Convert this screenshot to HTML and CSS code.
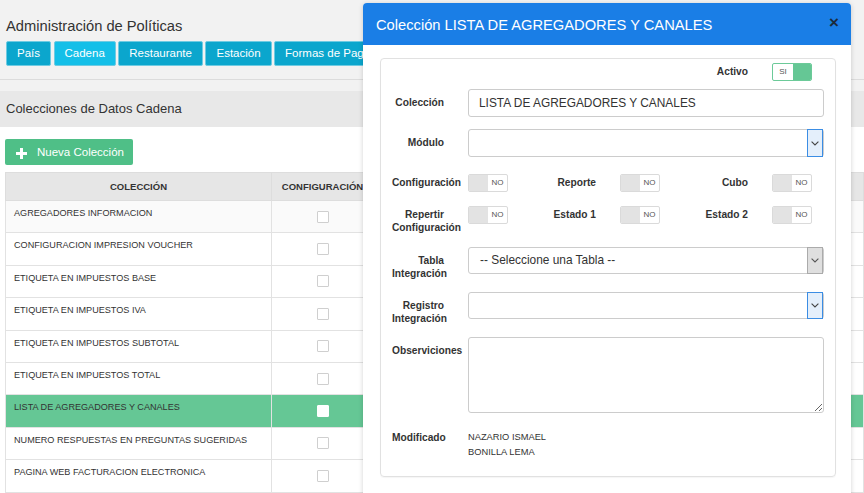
FILE: index.html
```html
<!DOCTYPE html>
<html lang="es">
<head>
<meta charset="utf-8">
<title>Administración de Políticas</title>
<link rel="stylesheet" href="styles.css">
</head>
<body>
<div class="page">
  <h1 class="page-title">Administración de Políticas</h1>
  <nav class="tabs">
    <a class="tab">País</a>
    <a class="tab active">Cadena</a>
    <a class="tab">Restaurante</a>
    <a class="tab">Estación</a>
    <a class="tab">Formas de Pago</a>
  </nav>
  <hr class="divider">
  <div class="band">Colecciones de Datos Cadena</div>
  <section class="content">
    <button class="btn-new" type="button">
      <svg class="plus" width="11" height="11" viewBox="0 0 11 11"><path d="M4 0h3v4h4v3H7v4H4V7H0V4h4z" fill="#fff"/></svg>
      <span>Nueva Colección</span>
    </button>
    <table class="grid">
      <colgroup><col class="c-name"><col class="c-check"><col></colgroup>
      <thead>
        <tr><th>COLECCIÓN</th><th>CONFIGURACIÓN</th><th></th></tr>
      </thead>
      <tbody>
        <tr><td>AGREGADORES INFORMACION</td><td class="ck"><span class="box"></span></td><td></td></tr>
        <tr><td>CONFIGURACION IMPRESION VOUCHER</td><td class="ck"><span class="box"></span></td><td></td></tr>
        <tr><td>ETIQUETA EN IMPUESTOS BASE</td><td class="ck"><span class="box"></span></td><td></td></tr>
        <tr><td>ETIQUETA EN IMPUESTOS IVA</td><td class="ck"><span class="box"></span></td><td></td></tr>
        <tr><td>ETIQUETA EN IMPUESTOS SUBTOTAL</td><td class="ck"><span class="box"></span></td><td></td></tr>
        <tr><td>ETIQUETA EN IMPUESTOS TOTAL</td><td class="ck"><span class="box"></span></td><td></td></tr>
        <tr class="selected"><td>LISTA DE AGREGADORES Y CANALES</td><td class="ck"><span class="box"></span></td><td></td></tr>
        <tr><td>NUMERO RESPUESTAS EN PREGUNTAS SUGERIDAS</td><td class="ck"><span class="box"></span></td><td></td></tr>
        <tr><td>PAGINA WEB FACTURACION ELECTRONICA</td><td class="ck"><span class="box"></span></td><td></td></tr>
      </tbody>
    </table>
  </section>
</div>

<div class="modal" role="dialog">
  <header class="modal-head">
    <h2 class="modal-title">Colección LISTA DE AGREGADORES Y CANALES</h2>
    <button class="close" type="button">×</button>
  </header>
  <div class="modal-body">
    <div class="panel">
      <div class="pairs p-activo">
        <div class="pair col3"><span class="lbl l-activo">Activo</span><span class="toggle on"><span class="t-text">SI</span><span class="knob"></span></span></div>
      </div>

      <div class="field f-coleccion">
        <label class="lbl">Colección</label>
        <input class="ctrl input" type="text" value="LISTA DE AGREGADORES Y CANALES">
      </div>

      <div class="field f-modulo">
        <label class="lbl">Módulo</label>
        <div class="ctrl select tall"><span class="sel-text"></span><span class="sel-arrow blue"><svg width="8" height="5" viewBox="0 0 8 5"><polyline points="0.6,0.6 4,4 7.4,0.6" fill="none" stroke="#444" stroke-width="1.1"/></svg></span></div>
      </div>

      <div class="pairs p-row1">
        <div class="pair"><span class="lbl">Configuración</span><span class="toggle"><span class="knob"></span><span class="t-text">NO</span></span></div>
        <div class="pair"><span class="lbl">Reporte</span><span class="toggle"><span class="knob"></span><span class="t-text">NO</span></span></div>
        <div class="pair"><span class="lbl">Cubo</span><span class="toggle"><span class="knob"></span><span class="t-text">NO</span></span></div>
      </div>

      <div class="pairs p-row2">
        <div class="pair"><span class="lbl">Repertir Configuración</span><span class="toggle"><span class="knob"></span><span class="t-text">NO</span></span></div>
        <div class="pair"><span class="lbl">Estado 1</span><span class="toggle"><span class="knob"></span><span class="t-text">NO</span></span></div>
        <div class="pair"><span class="lbl">Estado 2</span><span class="toggle"><span class="knob"></span><span class="t-text">NO</span></span></div>
      </div>

      <div class="field f-tabla">
        <label class="lbl">Tabla Integración</label>
        <div class="ctrl select"><span class="sel-text">-- Seleccione una Tabla --</span><span class="sel-arrow gray"><svg width="8" height="5" viewBox="0 0 8 5"><polyline points="0.6,0.6 4,4 7.4,0.6" fill="none" stroke="#555" stroke-width="1.1"/></svg></span></div>
      </div>

      <div class="field f-registro">
        <label class="lbl">Registro Integración</label>
        <div class="ctrl select"><span class="sel-text"></span><span class="sel-arrow blue"><svg width="8" height="5" viewBox="0 0 8 5"><polyline points="0.6,0.6 4,4 7.4,0.6" fill="none" stroke="#444" stroke-width="1.1"/></svg></span></div>
      </div>

      <div class="field f-obs">
        <label class="lbl l-obs">Observiciones</label>
        <textarea class="ctrl textarea"></textarea>
      </div>

      <div class="field f-mod">
        <span class="lbl l-mod">Modificado</span>
        <div class="mod-value">NAZARIO ISMAEL<br>BONILLA LEMA</div>
      </div>
    </div>
  </div>
</div>
</body>
</html>
```

FILE: styles.css
```css
* { box-sizing: border-box; }
html, body { margin: 0; height: 100%; }
body {
  background: #f2f2f2;
  font-family: "Liberation Sans", Arial, sans-serif;
  color: #333;
  overflow: hidden;
  position: relative;
}

/* ---------- background page ---------- */
.page { min-height: 100%; display: flex; flex-direction: column; }
.page-title {
  margin: 16px 0 0 6px;
  font-size: 14.7px;
  font-weight: normal;
  line-height: 20px;
  color: #333;
}
.tabs { display: flex; gap: 2.5px; margin: 5px 0 0 6px; white-space: nowrap; }
.tab {
  display: block;
  height: 25px;
  padding: 0 10px;
  line-height: 23px;
  border: 1px solid #6fcbe2;
  border-radius: 2px;
  background: #0ba6cd;
  color: #fff;
  font-size: 11.5px;
}
.tab.active { background: #14bfe8; }
.divider { margin: 13px 0 0; border: 0; border-top: 1px solid #dcdcdc; height: 0; }
.band {
  margin-top: 11px;
  height: 36px;
  line-height: 36px;
  padding-left: 6px;
  background: #e8e8e8;
  font-size: 13px;
}
.content { flex: 1; background: #fff; padding: 12px 0 0 5px; }
.btn-new {
  display: flex;
  align-items: center;
  gap: 10px;
  width: 128px;
  height: 26px;
  padding: 0 0 0 11px;
  border: 0;
  border-radius: 2px;
  background: #4fbf87;
  color: #fff;
  font: 11.5px "Liberation Sans", Arial, sans-serif;
}
.btn-new .plus { margin-top: 3px; }

.grid {
  margin-top: 7px;
  border-collapse: collapse;
  width: 100%;
  table-layout: fixed;
  font-size: 9.1px;
}
.c-name { width: 266px; }
.c-check { width: 102px; }
.grid th {
  height: 28px;
  background: #e6e6e6;
  border: 1px solid #dddddd;
  font-weight: bold;
  font-size: 9.5px;
  color: #333;
  text-align: center;
  padding: 0;
}
.grid td {
  height: 32.4px;
  border: 1px solid #e2e2e2;
  padding: 7px 8px 0;
  line-height: 11px;
  vertical-align: top;
  color: #333;
  white-space: nowrap;
  background: #fff;
}
.grid tbody tr:first-child td { background: #fafafa; }
.grid td.ck { text-align: center; vertical-align: middle; padding: 0; }
.box {
  display: inline-block;
  width: 12px;
  height: 12px;
  border: 1px solid #cfcfcf;
  border-radius: 1px;
  background: #fff;
  vertical-align: middle;
}
.grid tr.selected td { background: #65c795; }
.grid tr.selected .box { border-color: #fff; }

/* ---------- modal ---------- */
.modal {
  position: absolute;
  left: 363px;
  top: 3px;
  width: 488px;
  height: 520px;
  background: #fff;
  border-radius: 4px 4px 0 0;
  box-shadow: 0 1px 5px rgba(0, 0, 0, 0.18);
}
.modal-head {
  display: flex;
  align-items: flex-start;
  justify-content: space-between;
  height: 42px;
  padding: 0 12px 0 13px;
  background: #1a7ee6;
  border-radius: 4px 4px 0 0;
}
.modal-title {
  margin: 14px 0 0;
  font-size: 14.7px;
  font-weight: normal;
  line-height: 17px;
  color: #fff;
}
.close {
  margin-top: 11px;
  padding: 0;
  border: 0;
  background: transparent;
  font: bold 17px/17px "Liberation Sans", Arial, sans-serif;
  color: #1d1d1d;
  opacity: 0.85;
}
.modal-body { padding: 13px 15px 0 17px; }
.panel {
  border: 1px solid #e1e1e1;
  border-radius: 4px;
  padding: 4px 11px 15.5px;
  box-shadow: 0 1px 1px rgba(0, 0, 0, 0.04);
}

.lbl {
  flex: none;
  width: 52px;
  margin-right: 24px;
  text-align: right;
  font-weight: bold;
  font-size: 10.2px;
  line-height: 13px;
  padding-top: 6.5px;
  color: #333;
}
.field { display: flex; align-items: flex-start; }
.pairs { display: grid; grid-template-columns: 152px 152px 1fr; }
.pair { display: flex; align-items: flex-start; }
.pair .lbl { padding-top: 2.5px; }
.pair .l-activo { padding-top: 1.5px; }
.col3 { grid-column: 3; }

.p-activo { margin-top: 0; }
.f-coleccion { margin-top: 8px; }
.f-modulo { margin-top: 12px; }
.p-row1 { margin-top: 16.5px; }
.p-row2 { margin-top: 14px; }
.p-row2 .lbl { padding-top: 2px; }
.f-tabla { margin-top: 13.5px; }
.f-registro { margin-top: 12.5px; }
.f-obs { margin-top: 12.5px; }
.f-mod { margin-top: 17px; }
.l-obs { padding-top: 7px; }
.l-mod { padding-top: 0; line-height: 15px; }

.toggle {
  display: inline-flex;
  flex: none;
  width: 40px;
  height: 18px;
  border: 1px solid #dadada;
  border-radius: 2px;
  background: #fff;
  overflow: hidden;
}
.toggle .knob { width: 19px; background: #e3e3e3; }
.toggle .t-text {
  flex: 1;
  font-size: 8px;
  line-height: 16px;
  text-align: center;
  color: #555;
}
.toggle.on { border-color: #6cca99; }
.toggle.on .knob { background: #65c795; width: 18px; }

.ctrl { flex: 1; min-width: 0; }
.input {
  height: 28px;
  border: 1px solid #cccccc;
  border-radius: 3px;
  padding: 0 10px;
  font: 11.9px "Liberation Sans", Arial, sans-serif;
  color: #333;
  background: #fff;
  outline: none;
}
.select {
  display: flex;
  height: 27px;
  border: 1px solid #cccccc;
  border-radius: 3px;
  background: #fff;
}
.select.tall { height: 28px; }
.sel-text {
  flex: 1;
  padding-left: 11px;
  font-size: 11.9px;
  line-height: 25px;
  color: #333;
}
.sel-arrow {
  display: flex;
  align-items: center;
  justify-content: center;
  width: 16px;
  margin: -1px 0;
}
.sel-arrow.blue { background: #e4effb; border: 1px solid #3b8de4; }
.sel-arrow.gray { background: #dfdfdf; border: 1px solid #ababab; }

.textarea {
  height: 76px;
  border: 1px solid #cccccc;
  border-radius: 3px;
  resize: vertical;
  font: 11.7px "Liberation Sans", Arial, sans-serif;
  outline: none;
}
.mod-value {
  font-size: 9.3px;
  line-height: 15px;
  color: #333;
}
```
